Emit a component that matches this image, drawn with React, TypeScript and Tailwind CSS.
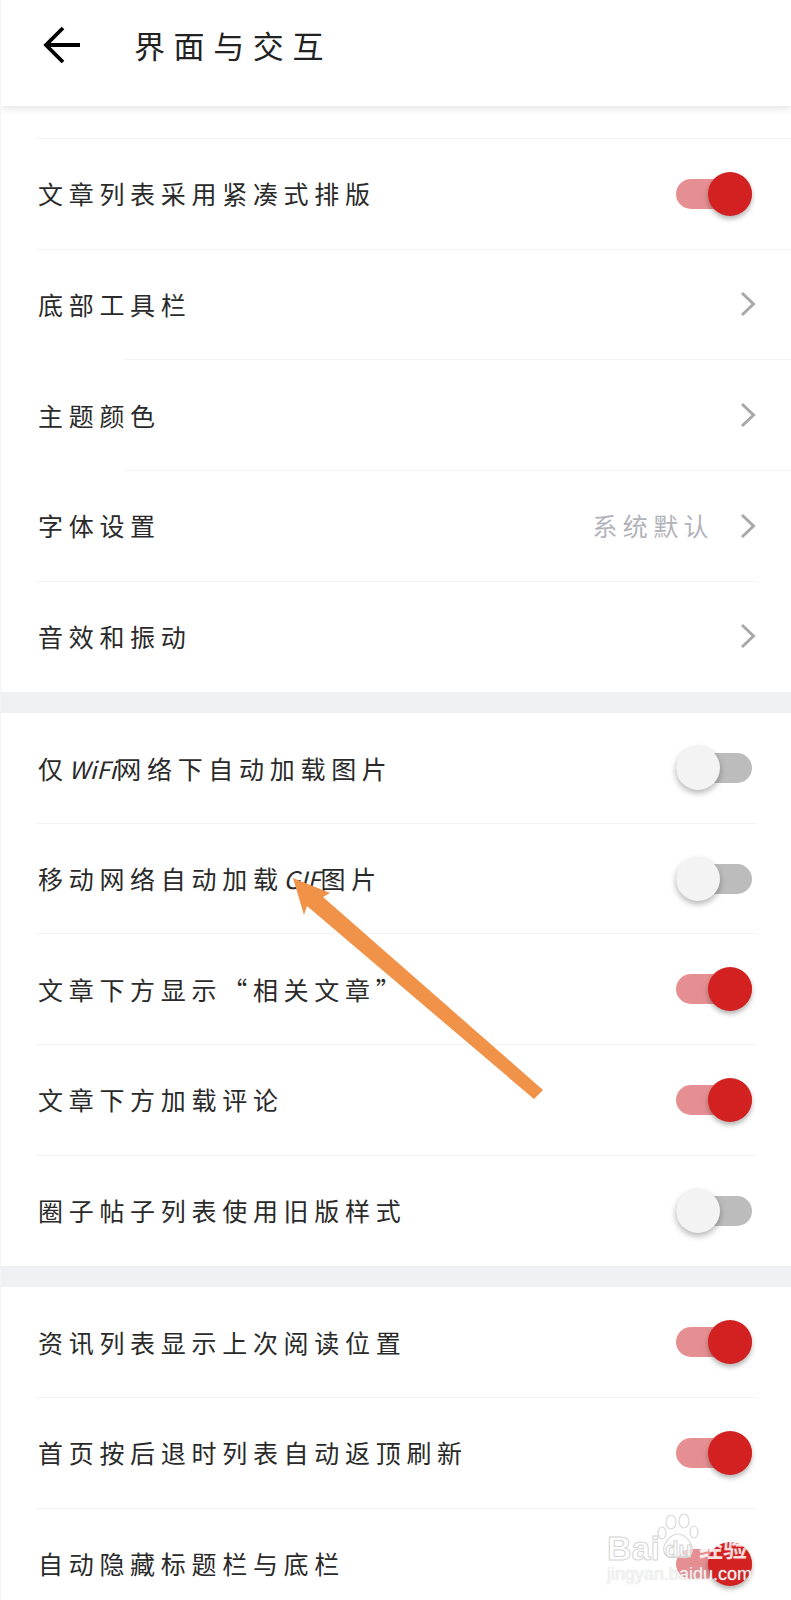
import React from "react";

const Chevron = () => (
  <svg width="16" height="26" viewBox="0 0 16 26" fill="none" className="shrink-0">
    <path d="M2 2L13.5 13L2 24" stroke="#a8a8a8" strokeWidth="3" />
  </svg>
);

const Toggle = ({ on }: { on: boolean }) => (
  <div className="relative mr-[4px] h-[46px] w-[76px] shrink-0">
    <div className={`absolute inset-x-0 top-[8px] h-[30px] rounded-full ${on ? "bg-[#e68f92]" : "bg-[#bcbcbc]"}`} />
    <div
      className={
        on
          ? "absolute right-0 top-[1px] h-[44px] w-[44px] rounded-full bg-[#d32121] shadow-[0_3px_5px_rgba(0,0,0,0.3)]"
          : "absolute left-0 top-[1px] h-[44px] w-[44px] rounded-full bg-[#f3f3f3] shadow-[0_3px_6px_rgba(0,0,0,0.3)]"
      }
    />
  </div>
);

type RowProps = {
  label: React.ReactNode;
  on?: boolean;
  value?: string;
  link?: boolean;
  divider?: "wide" | "inset" | "short" | "none";
};

const dividerClass = {
  wide: "ml-[35px] h-px bg-[#f3f3f3]",
  inset: "ml-[123px] h-px bg-[#f3f3f3]",
  short: "ml-[35px] mr-[34px] h-px bg-[#f3f3f3]",
  none: "h-px",
};

const Row = ({ label, on, value, link, divider = "short" }: RowProps) => (
  <div>
    <div className="flex h-[109.65px] items-center justify-between pl-[37px] pr-[35px]">
      <span className="text-[25px] font-normal leading-none tracking-[5.7px] text-[#2a2a2a]">{label}</span>
      <div className="flex items-center">
        {value && <span className="mr-[26px] text-[25px] font-normal leading-none tracking-[5.4px] text-[#b2b3ba]">{value}</span>}
        {link ? <Chevron /> : <Toggle on={!!on} />}
      </div>
    </div>
    <div className={dividerClass[divider]} />
  </div>
);

const Latin = ({ children }: { children: React.ReactNode }) => (
  <span className="text-[24px] italic tracking-normal">{children}</span>
);

export default function App() {
  return (
    <div
      lang="zh-CN"
      className="relative h-[1600px] w-[791px] overflow-hidden border-l border-[#f4f4f4] bg-white font-['Noto_Sans_CJK_SC','Noto_Sans',sans-serif]"
    >
      <header className="relative z-10 flex h-[106px] items-start bg-white pl-[42px] pt-[25px] shadow-[0_2px_8px_rgba(0,0,0,0.12)]">
        <svg width="38" height="38" viewBox="0 0 38 38" fill="none" className="shrink-0">
          <path d="M37 20H4M20 3L3 20L20 37" stroke="#000" strokeWidth="3.8" />
        </svg>
        <h1 className="ml-[53px] text-[31px] font-normal leading-[40px] tracking-[8.6px] text-[#222]">界面与交互</h1>
      </header>

      <section>
        <div className="h-[32px]" />
        <div className="ml-[35px] h-px bg-[#f3f3f3]" />
        <Row label="文章列表采用紧凑式排版" on divider="wide" />
        <Row label="底部工具栏" link divider="inset" />
        <Row label="主题颜色" link divider="inset" />
        <Row label="字体设置" value="系统默认" link divider="short" />
        <Row label="音效和振动" link divider="none" />
      </section>

      <div className="h-[21px] bg-[#f0f1f5]" />

      <section>
        <Row label={<>仅<Latin>WiFi</Latin>网络下自动加载图片</>} on={false} />
        <Row label={<>移动网络自动加载<Latin>GIF</Latin>图片</>} on={false} />
        <Row label="文章下方显示“相关文章”" on />
        <Row label="文章下方加载评论" on />
        <Row label="圈子帖子列表使用旧版样式" on={false} divider="none" />
      </section>

      <div className="h-[21px] bg-[#f0f1f5]" />

      <section>
        <Row label="资讯列表显示上次阅读位置" on />
        <Row label="首页按后退时列表自动返顶刷新" on />
        <Row label="自动隐藏标题栏与底栏" on divider="none" />
      </section>

      {/* annotation arrow painted over the screenshot */}
      <svg className="absolute left-[-1px] top-0 z-20" width="791" height="1600" viewBox="0 0 791 1600" fill="none">
        <path d="M293 878L330 893L323 897L543 1090L534 1099L307 906L304 915Z" fill="#f09247" />
      </svg>

      {/* watermark */}
      <div className="absolute left-[606px] top-[1514px] z-30 h-[70px] w-[150px]">
        <svg className="absolute left-[50px] top-0" width="42" height="46" viewBox="0 0 42 46" fill="rgba(255,255,255,0.55)" stroke="#d9d9d9" strokeWidth="1.2">
          <ellipse cx="5" cy="19" rx="4" ry="6" />
          <ellipse cx="14" cy="8" rx="5" ry="7" />
          <ellipse cx="27" cy="7" rx="5" ry="7" />
          <ellipse cx="37" cy="18" rx="4" ry="6" />
          <path d="M21 20C13 20 5 31 7 38C9 45 16 44 21 43C26 44 33 45 35 38C37 31 29 20 21 20Z" />
        </svg>
        <span className="absolute left-0 top-[17px] font-['Liberation_Sans',sans-serif] text-[34px] font-bold leading-[34px] text-white/70 [-webkit-text-stroke:1px_#d4d4d4]">Bai</span>
        <span className="absolute left-[58px] top-[24px] font-['Liberation_Sans',sans-serif] text-[22px] font-bold leading-[24px] text-white/70 [-webkit-text-stroke:1px_#d4d4d4]">du</span>
        <span className="absolute left-[92px] top-[19px] text-[24px] font-bold leading-[28px] text-white/85">经验</span>
        <span className="absolute left-0 top-[50px] font-['Liberation_Sans',sans-serif] text-[18px] leading-[20px] text-white/85 [text-shadow:0_0_1px_#bbb]">jingyan.baidu.com</span>
      </div>
    </div>
  );
}
